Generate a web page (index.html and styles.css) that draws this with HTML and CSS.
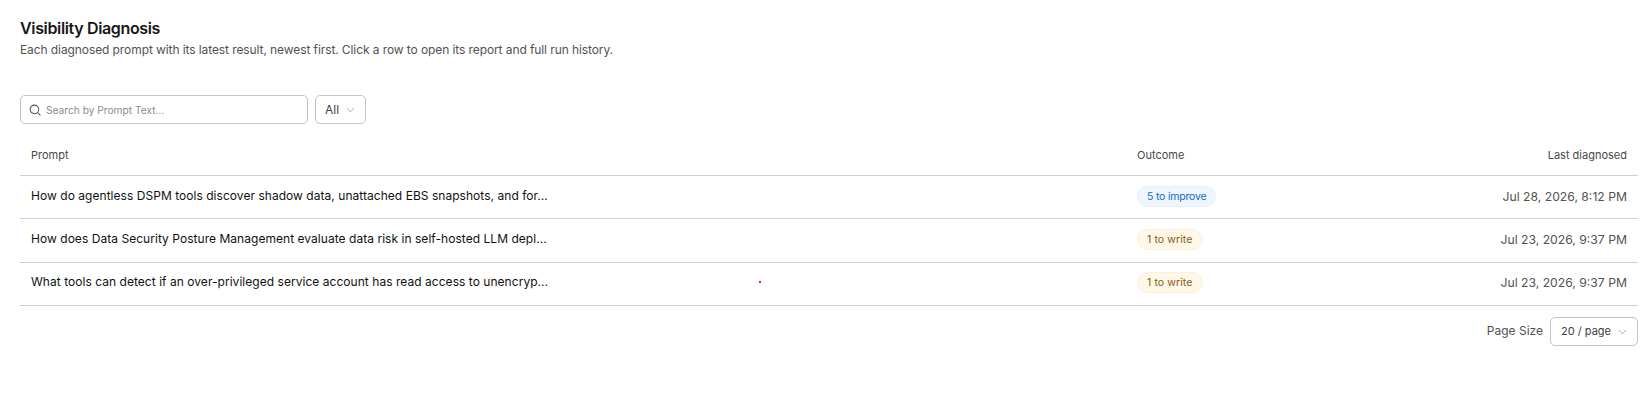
FILE: index.html
```html
<!DOCTYPE html>
<html lang="en">
<head>
<meta charset="utf-8">
<title>Visibility Diagnosis</title>
<link rel="stylesheet" href="styles.css">
</head>
<body>
<main class="page">
  <header class="intro">
    <h1 class="title">Visibility Diagnosis</h1>
    <p class="subtitle">Each diagnosed prompt with its latest result, newest first. Click a row to open its report and full run history.</p>
  </header>
  <div class="filters">
    <label class="search">
      <svg class="search-icon" viewBox="0 0 14 14" width="12" height="12" fill="none" stroke="#555" stroke-width="1.2" stroke-linecap="round"><circle cx="6.3" cy="6.3" r="5"/><path d="M10 10 13 13"/></svg>
      <span class="placeholder">Search by Prompt Text...</span>
    </label>
    <div class="select select-all">
      <span>All</span>
      <svg class="chevron" viewBox="0 0 10 10" width="9" height="9" fill="none" stroke="#a3a3a3" stroke-width="1"><path d="M1 3.5 5 7.5 9 3.5"/></svg>
    </div>
  </div>
  <div class="table">
    <div class="row head">
      <div class="cell prompt">Prompt</div>
      <div class="cell outcome">Outcome</div>
      <div class="cell date">Last diagnosed</div>
    </div>
    <div class="row body">
      <div class="cell prompt">How do agentless DSPM tools discover shadow data, unattached EBS snapshots, and for...</div>
      <div class="cell outcome"><span class="tag blue">5 to improve</span></div>
      <div class="cell date">Jul 28, 2026, 8:12 PM</div>
    </div>
    <div class="row body">
      <div class="cell prompt">How does Data Security Posture Management evaluate data risk in self-hosted LLM depl...</div>
      <div class="cell outcome"><span class="tag amber">1 to write</span></div>
      <div class="cell date">Jul 23, 2026, 9:37 PM</div>
    </div>
    <div class="row body">
      <div class="cell prompt">What tools can detect if an over-privileged service account has read access to unencryp...<i class="dot"></i></div>
      <div class="cell outcome"><span class="tag amber">1 to write</span></div>
      <div class="cell date">Jul 23, 2026, 9:37 PM</div>
    </div>
  </div>
  <footer class="pager">
    <span class="pager-label">Page Size</span>
    <div class="select select-size">
      <span>20 / page</span>
      <svg class="chevron" viewBox="0 0 10 10" width="9" height="9" fill="none" stroke="#a3a3a3" stroke-width="1"><path d="M1 3.5 5 7.5 9 3.5"/></svg>
    </div>
  </footer>
</main>
</body>
</html>
```
FILE: styles.css
```css
* { box-sizing: border-box; }
html, body { margin: 0; background: #fff; }
body { font-family: Inter, "Liberation Sans", sans-serif; color: #111; height: 405px; overflow: hidden; }
.page { padding: 18px 5px 0 20px; }
.title { margin: 0; font-size: 16px; line-height: 20px; font-weight: 600; letter-spacing: -0.35px; color: #171717; }
.subtitle { margin: 3px 0 0; font-size: 12px; line-height: 17px; letter-spacing: -0.09px; color: #525252; }
.filters { display: flex; gap: 7px; margin-top: 37px; }
.search { display: flex; align-items: center; gap: 5px; width: 288px; height: 29px; padding: 0 8px; border: 1px solid #c4c4c4; border-radius: 5px; }
.placeholder { font-size: 10.2px; color: #8c8c8c; }
.search-icon { flex: none; }
.select { display: flex; align-items: center; border: 1px solid #c4c4c4; border-radius: 5px; color: #404040; font-size: 11px; }
.select-all { width: 51px; height: 29px; padding: 0 9px; gap: 7px; font-size: 12px; }
.select-size { width: 88px; height: 29px; padding: 0 10px; justify-content: space-between; }
.table { margin-top: 5px; }
.row { display: grid; grid-template-columns: 1106px 1fr 1fr; align-items: center; border-bottom: 1px solid #d0d0d0; }
.head { height: 47px; padding-top: 5px; font-size: 11px; color: #484848; }
.body { height: 43.3px; font-size: 12px; letter-spacing: 0.04px; color: #111; }
.cell { padding: 0 11px; }
.date { text-align: right; }
.body .prompt { padding-bottom: 4px; }
.body .outcome { padding-bottom: 2px; }
.body .date { padding-bottom: 2px; color: #525252; font-size: 12.2px; letter-spacing: 0; }
.prompt { position: relative; }
.tag { display: inline-block; height: 21px; line-height: 19px; padding: 0 9px; border: 1px solid; border-radius: 11px; font-size: 10.5px; }
.blue { background: #eff6ff; border-color: #e6f0fb; color: #1668c7; letter-spacing: -0.2px; }
.amber { background: #fff7e8; border-color: #fdf0d8; color: #8a5a14; letter-spacing: 0.1px; }
.dot { position: absolute; left: 739px; top: 7px; width: 2px; height: 2px; background: #d62828; }
.pager { display: flex; justify-content: flex-end; align-items: center; gap: 7px; margin-top: 11px; }
.pager-label { padding-bottom: 1px; font-size: 12px; color: #525252; }
```
